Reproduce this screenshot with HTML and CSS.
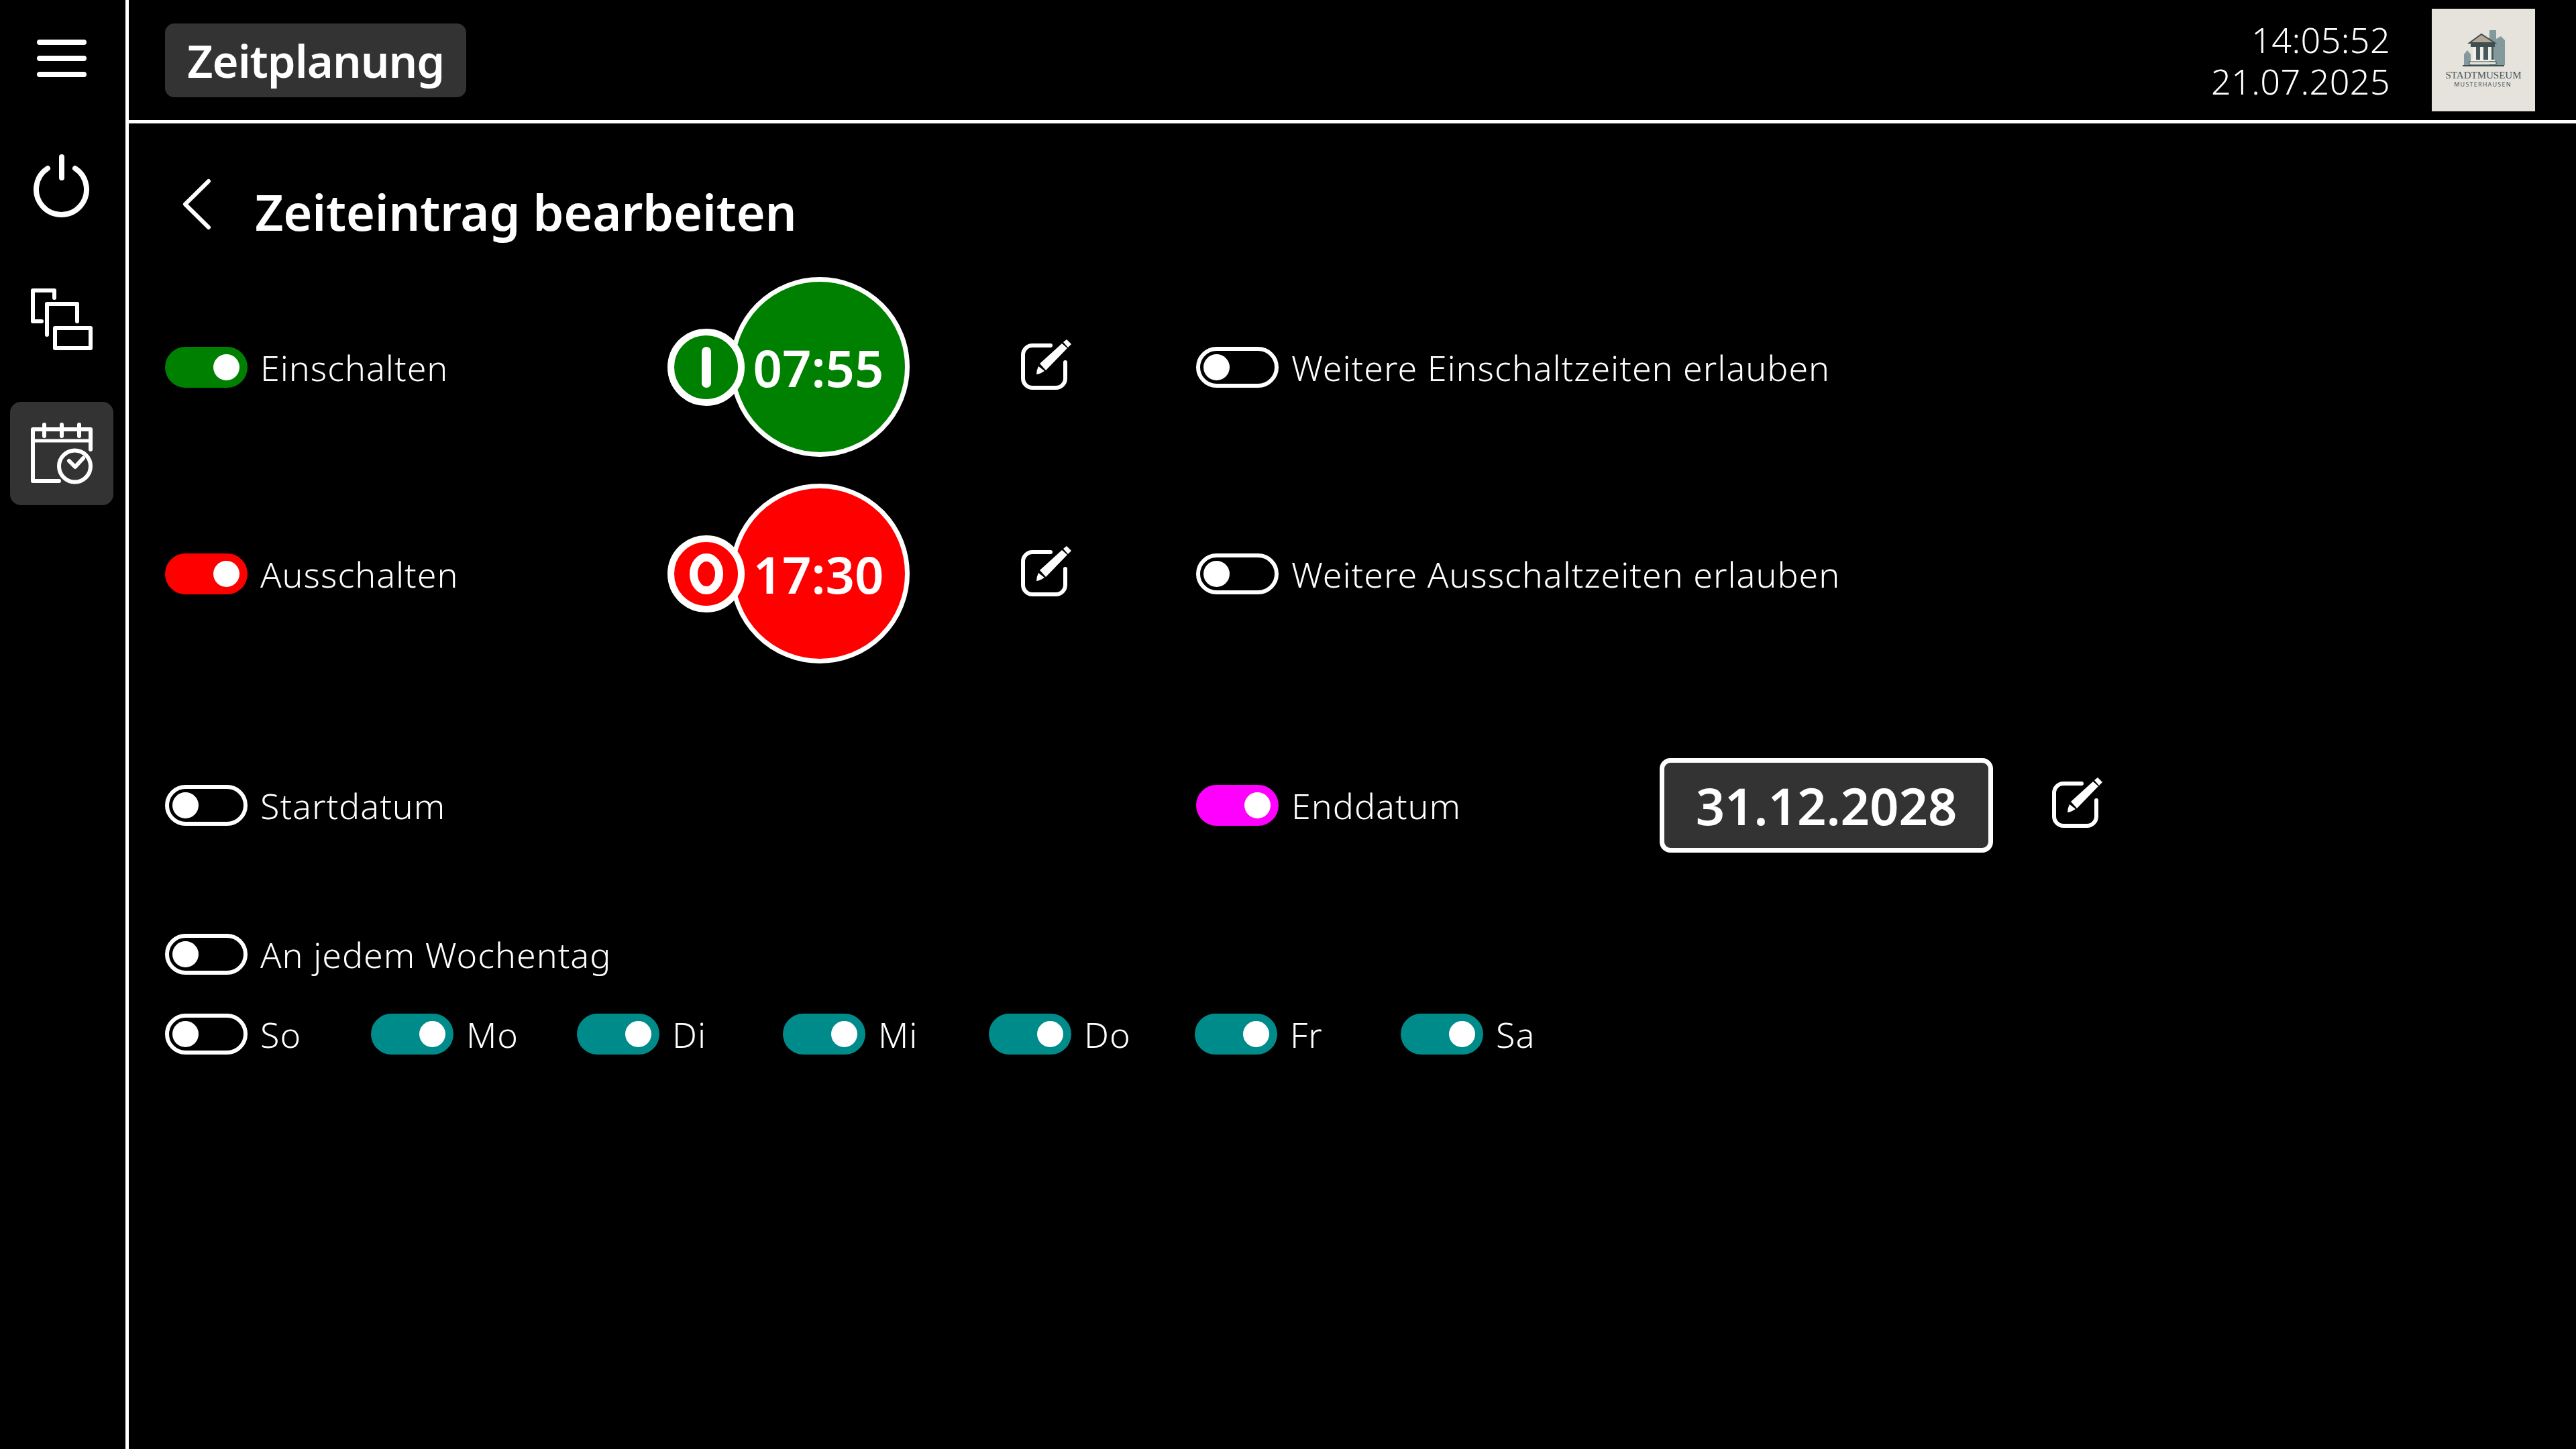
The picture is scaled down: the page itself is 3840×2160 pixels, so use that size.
FILE: index.html
```html
<!DOCTYPE html>
<html lang="de">
<head>
    <meta charset="UTF-8">
    <title>Zeitplanung</title>
    <link rel="stylesheet" href="styles.css">
</head>
<body>

    <svg class="defs" width="0" height="0">
        <symbol id="edit" viewBox="0 0 75 75">
            <path d="M44 9H17a14 14 0 0 0-14 14V58a14 14 0 0 0 14 14H52a14 14 0 0 0 14-14V34" fill="none" stroke="#fff" stroke-width="6" stroke-linecap="round"/>
            <path d="M28 36L61 6L69 13L37 46Z" fill="#fff"/>
            <path d="M63 4L68 0L75 7L70 12Z" fill="#fff"/>
            <path d="M26 40L35 47L30 50Q26 52 23 52Q23 46 26 40Z" fill="#fff"/>
        </symbol>
    </svg>

    <div class="app">
        <nav class="sidebar">
            <div class="nav-btn nav-menu">
                <svg class="nav-icon" viewBox="0 0 92 92">
                    <path d="M13 22H79M13 46H79M13 70H79" stroke-width="8"/>
                </svg>
            </div>
            <div class="nav-btn">
                <svg class="nav-icon" viewBox="0 0 92 92">
                    <path d="M46 4V35" stroke-width="8"/>
                    <path d="M25 21A37.5 37.5 0 1 0 66 21" stroke-width="8"/>
                </svg>
            </div>
            <div class="nav-btn">
                <svg class="nav-icon" viewBox="0 0 92 92">
                    <path d="M35 14V3H3V49H16"/>
                    <path d="M69 49V23H24V69"/>
                    <rect x="36" y="59" width="53" height="30"/>
                </svg>
            </div>
            <div class="nav-btn active">
                <svg class="nav-icon" viewBox="0 0 92 92">
                    <path d="M89 40V10H3V87H42"/>
                    <path d="M3 27H89" stroke-width="5"/>
                    <path d="M20 3V20M46 3V20M72 3V20"/>
                    <circle cx="65.5" cy="65" r="23.5"/>
                    <path d="M57 57L66 66L78 53"/>
                </svg>
            </div>
        </nav>

        <div class="main">
            <header class="topbar">
                <div class="app-title">Zeitplanung</div>
                <div class="clock">
                    <div>14:05:52</div>
                    <div>21.07.2025</div>
                </div>
                <svg class="logo" viewBox="0 0 154 153">
                    <rect width="154" height="153" fill="#e6e2dc"/>
                    <path d="M86 32H96V45L103 41L109 47V84H48V68L53 62L58 68V84H86Z" fill="#84999b"/>
                    <path d="M56 51L74 38L94 51Z" fill="#b5a796" stroke="#3f4f50" stroke-width="2"/>
                    <rect x="58" y="52" width="36" height="5" fill="#3f4f50"/>
                    <rect x="61" y="57" width="31" height="19" fill="#47595b"/>
                    <rect x="61" y="57" width="5" height="19" fill="#f1efe9"/>
                    <rect x="72" y="57" width="5" height="19" fill="#f1efe9"/>
                    <rect x="84" y="57" width="5" height="19" fill="#f1efe9"/>
                    <rect x="58" y="76" width="36" height="2" fill="#f1efe9"/>
                    <rect x="56" y="79" width="40" height="4" fill="#f1efe9" stroke="#3f4f50"/>
                    <rect x="46" y="84" width="62" height="2" fill="#3f4f50"/>
                    <text class="logo-name" x="77" y="104" text-anchor="middle">STADTMUSEUM</text>
                    <text class="logo-town" x="76" y="116" text-anchor="middle">MUSTERHAUSEN</text>
                </svg>
            </header>

            <section class="content">
                <div class="page-head">
                    <svg class="back" viewBox="0 0 43 77">
                        <path d="M39 4L4 38.5L39 73"/>
                    </svg>
                    <h1>Zeiteintrag bearbeiten</h1>
                </div>

                <div class="row row-time">
                    <div class="field">
                        <span class="toggle on green"><i></i></span>
                        <span class="label">Einschalten</span>
                    </div>
                    <div class="badge green">
                        <span class="badge-small">
                            <svg viewBox="0 0 50 61"><rect x="18" y="0" width="14" height="61" rx="7" fill="#fff"/></svg>
                        </span>
                        <span class="badge-time">07:55</span>
                    </div>
                    <svg class="edit"><use href="#edit"/></svg>
                    <div class="field">
                        <span class="toggle"><i></i></span>
                        <span class="label">Weitere Einschaltzeiten erlauben</span>
                    </div>
                </div>

                <div class="row row-time row-off">
                    <div class="field">
                        <span class="toggle on red"><i></i></span>
                        <span class="label">Ausschalten</span>
                    </div>
                    <div class="badge red">
                        <span class="badge-small">
                            <svg viewBox="0 0 50 61"><ellipse cx="25" cy="30.5" rx="19" ry="24.5" fill="none" stroke="#fff" stroke-width="12"/></svg>
                        </span>
                        <span class="badge-time">17:30</span>
                    </div>
                    <svg class="edit"><use href="#edit"/></svg>
                    <div class="field">
                        <span class="toggle"><i></i></span>
                        <span class="label">Weitere Ausschaltzeiten erlauben</span>
                    </div>
                </div>

                <div class="row row-date">
                    <div class="field">
                        <span class="toggle"><i></i></span>
                        <span class="label">Startdatum</span>
                    </div>
                    <div></div>
                    <div></div>
                    <div class="field">
                        <span class="toggle on magenta"><i></i></span>
                        <span class="label">Enddatum</span>
                    </div>
                    <div class="date-box">31.12.2028</div>
                    <svg class="edit"><use href="#edit"/></svg>
                </div>

                <div class="field row-all">
                    <span class="toggle"><i></i></span>
                    <span class="label">An jedem Wochentag</span>
                </div>

                <div class="days">
                    <div class="field day"><span class="toggle"><i></i></span><span class="label">So</span></div>
                    <div class="field day"><span class="toggle on teal"><i></i></span><span class="label">Mo</span></div>
                    <div class="field day"><span class="toggle on teal"><i></i></span><span class="label">Di</span></div>
                    <div class="field day"><span class="toggle on teal"><i></i></span><span class="label">Mi</span></div>
                    <div class="field day"><span class="toggle on teal"><i></i></span><span class="label">Do</span></div>
                    <div class="field day"><span class="toggle on teal"><i></i></span><span class="label">Fr</span></div>
                    <div class="field day"><span class="toggle on teal"><i></i></span><span class="label">Sa</span></div>
                </div>
            </section>
        </div>
    </div>

</body>
</html>
```

FILE: styles.css
```css
html, body {
    margin: 0;
    height: 100%;
    background: #000;
    color: #fff;
    font-family: "Noto Sans", sans-serif;
}
.defs {
    position: absolute;
}
.app {
    display: flex;
    height: 2160px;
}

/* sidebar */
.sidebar {
    width: 184px;
    flex: none;
    border-right: 5px solid #fff;
    display: flex;
    flex-direction: column;
    align-items: center;
    padding: 199px 3px 0 0;
    gap: 46px;
}
.nav-btn {
    width: 154px;
    height: 154px;
    border-radius: 16px;
    display: flex;
    align-items: center;
    justify-content: center;
}
.nav-menu {
    margin-top: -189px;
    margin-bottom: -11px;
}
.nav-btn.active {
    background: #333;
}
.nav-icon {
    width: 92px;
    height: 92px;
    overflow: visible;
    fill: none;
    stroke: #fff;
    stroke-width: 6;
    stroke-linecap: round;
    stroke-linejoin: round;
}

/* top bar */
.main {
    flex: 1;
    display: flex;
    flex-direction: column;
}
.topbar {
    height: 179px;
    border-bottom: 5px solid #fff;
    display: flex;
    align-items: center;
    padding: 0 61px 0 54px;
}
.app-title {
    width: 449px;
    height: 110px;
    background: #333;
    border-radius: 14px;
    display: flex;
    align-items: center;
    justify-content: center;
    font-size: 67px;
    font-weight: 600;
    letter-spacing: -1px;
}
.clock {
    margin-left: auto;
    margin-right: 62px;
    text-align: right;
    font-size: 52px;
    font-weight: 300;
    line-height: 62px;
    letter-spacing: 0.4px;
}
.logo {
    width: 154px;
    height: 153px;
}
.logo-name {
    font-family: "Liberation Serif", serif;
    font-size: 15px;
    fill: #47595b;
}
.logo-town {
    font-family: "Noto Sans", sans-serif;
    font-size: 9px;
    letter-spacing: 1.2px;
    fill: #47595b;
}

/* form */
.content {
    padding-left: 54px;
}
.page-head {
    height: 229px;
    display: flex;
    align-items: flex-start;
    box-sizing: border-box;
    padding: 82px 0 0 26px;
}
.back {
    width: 43px;
    height: 77px;
    fill: none;
    stroke: #fff;
    stroke-width: 6;
    stroke-linecap: round;
    stroke-linejoin: round;
}
h1 {
    margin: 0 0 0 65px;
    font-size: 74px;
    font-weight: 600;
    line-height: 100px;
    letter-spacing: -0.3px;
}
.row {
    display: grid;
    grid-template-columns: 749px 527px 261px 691px 585px auto;
    align-items: center;
}
.row-off {
    margin-top: 40px;
}
.row-date {
    margin-top: 141px;
}
.row-all {
    margin-top: 121px;
}
.days {
    margin-top: 58px;
    display: flex;
}
.day {
    width: 307px;
}
.field {
    display: flex;
    align-items: center;
    gap: 19px;
}
.label {
    font-size: 52px;
    font-weight: 300;
    line-height: 61px;
    letter-spacing: 1px;
    white-space: nowrap;
}

/* toggle */
.toggle {
    width: 123px;
    height: 61px;
    box-sizing: border-box;
    flex: none;
    border: 6px solid #fff;
    border-radius: 31px;
    padding: 0 5px;
    display: flex;
    align-items: center;
}
.toggle i {
    width: 39px;
    height: 39px;
    border-radius: 50%;
    background: #fff;
}
.toggle.on {
    border: 0;
    padding: 0 12px;
    justify-content: flex-end;
}
.toggle.green { background: #008000; }
.toggle.red { background: #f00; }
.toggle.magenta { background: #f0f; }
.toggle.teal { background: #008b8b; }

/* time badge */
.badge {
    display: flex;
    align-items: center;
}
.badge-small {
    width: 115px;
    height: 115px;
    box-sizing: border-box;
    border: 10px solid #fff;
    border-radius: 50%;
    display: flex;
    align-items: center;
    justify-content: center;
    position: relative;
    z-index: 1;
    flex: none;
}
.badge-small svg {
    width: 50px;
    height: 61px;
}
.badge-time {
    width: 268px;
    height: 268px;
    box-sizing: border-box;
    border: 7px solid #fff;
    border-radius: 50%;
    margin-left: -22px;
    padding-right: 4px;
    display: flex;
    align-items: center;
    justify-content: center;
    flex: none;
    font-size: 76px;
    font-weight: 600;
    letter-spacing: 0;
}
.badge.green .badge-small, .badge.green .badge-time { background: #008000; }
.badge.red .badge-small, .badge.red .badge-time { background: #f00; }

.edit {
    width: 75px;
    height: 75px;
    margin-bottom: 8px;
}
.date-box {
    width: 497px;
    height: 141px;
    box-sizing: border-box;
    border: 7px solid #fff;
    border-radius: 16px;
    background: #333;
    display: flex;
    align-items: center;
    justify-content: center;
    font-size: 76px;
    font-weight: 600;
    letter-spacing: 0;
}
```
